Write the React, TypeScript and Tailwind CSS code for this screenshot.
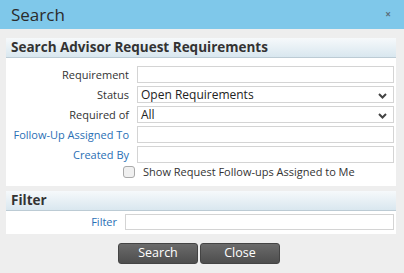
import React from 'react';

const labelCls = 'text-[11px] leading-[17px] text-right pr-[8px] shrink-0';

const Chevron: React.FC = () => (
  <svg width="9" height="6" viewBox="0 0 9 6" className="absolute right-[6px] top-[6px]">
    <path d="M1 1 L4.5 4.5 L8 1" fill="none" stroke="#444" strokeWidth="2" />
  </svg>
);

const Row: React.FC<{ label: string; blue?: boolean; select?: string }> = ({ label, blue, select }) => (
  <div className="flex items-center h-[20px]">
    <div className={`${labelCls} w-[131px] ${blue ? 'text-[#2a6fb5]' : 'text-[#333]'}`}>{label}</div>
    <div className="relative w-[257px] h-[17px] bg-white border border-[#d4d4d4]">
      {select && (
        <>
          <span className="absolute left-[3px] top-0 text-[12px] leading-[15px] text-[#222]">{select}</span>
          <Chevron />
        </>
      )}
    </div>
  </div>
);

const SectionHeader: React.FC<{ title: string }> = ({ title }) => (
  <div className="h-[20px] pl-[5px] flex items-center bg-gradient-to-b from-[#f6f9fb] to-[#d9e7ef] border-b border-[#bccbd4]">
    <span className="text-[13.5px] font-bold text-[#333] leading-none">{title}</span>
  </div>
);

const App: React.FC = () => {
  return (
    <div className="w-[404px] h-[273px] bg-[#eeeeee] overflow-hidden flex flex-col" style={{ fontFamily: '"Open Sans", sans-serif' }}>
      <div className="h-[29px] bg-[#7fc8ea] flex items-center justify-between pl-[11px] pr-[13px]">
        <span className="text-[17px] text-[#2b2b2b]">Search</span>
        <span className="text-[10px] text-[#5a6e7a] font-bold">×</span>
      </div>

      <div className="pl-[6px] pr-[8px] pt-[9px] flex flex-col">
        <SectionHeader title="Search Advisor Request Requirements" />
        <div className="bg-white pt-[6px] pb-[6px] flex flex-col">
          <Row label="Requirement" />
          <Row label="Status" select="Open Requirements" />
          <Row label="Required of" select="All" />
          <Row label="Follow-Up Assigned To" blue />
          <Row label="Created By" blue />
          <div className="flex items-center h-[16px] pl-[117px]">
            <div className="w-[12px] h-[12px] rounded-[3px] border border-[#aaa] bg-[#f0f0f0]" />
            <span className="ml-[8px] text-[11px] text-[#333]">Show Request Follow-ups Assigned to Me</span>
          </div>
        </div>

        <div className="mt-[5px]">
          <SectionHeader title="Filter" />
        </div>
        <div className="bg-white pt-[2px] pb-[4px] flex items-center">
          <div className={`${labelCls} w-[119px] text-[#2a6fb5]`}>Filter</div>
          <div className="w-[269px] h-[16px] bg-white border border-[#d4d4d4]" />
        </div>

        <div className="flex justify-center gap-[2px] mt-[9px] pr-[4px]">
          <button className="w-[80px] h-[21px] rounded-[3px] bg-gradient-to-b from-[#6b6b6b] to-[#4e4e4e] border border-[#444] text-white text-[12.5px] leading-none">
            Search
          </button>
          <button className="w-[80px] h-[21px] rounded-[3px] bg-gradient-to-b from-[#6b6b6b] to-[#4e4e4e] border border-[#444] text-white text-[12.5px] leading-none">
            Close
          </button>
        </div>
      </div>
    </div>
  );
};

export default App;
